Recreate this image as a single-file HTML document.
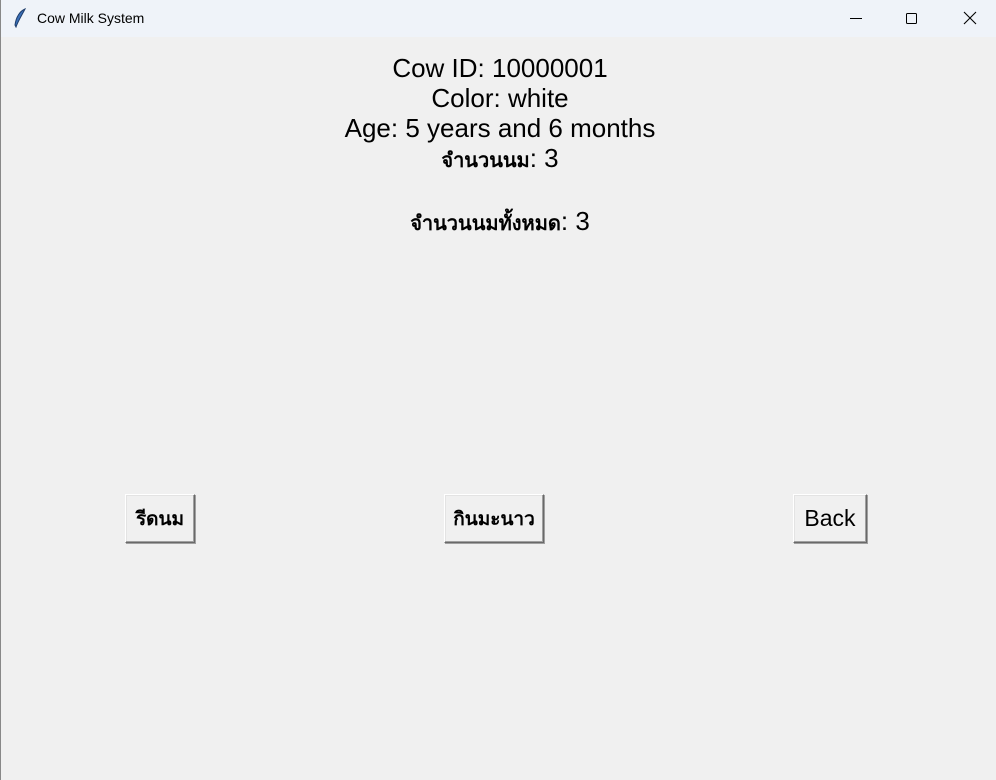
<!DOCTYPE html>
<html><head><meta charset="utf-8"><style>
body{margin:0;width:996px;height:780px;background:#f0f0f0;position:relative;overflow:hidden;font-family:"Liberation Sans",sans-serif;}
.tb{position:absolute;left:0;top:0;width:996px;height:37px;background:#eff3f9;}
.tb .t{position:absolute;left:37px;top:10px;font-size:14px;color:#000;font-family:"Segoe UI","Liberation Sans",sans-serif;}
.edge{position:absolute;left:0;top:0;width:1px;height:780px;background:#888;}
.l{position:absolute;left:0;width:1000px;text-align:center;font-size:26px;color:#000;line-height:30px;}
.th{font-weight:bold;font-size:20px;}
.b{position:absolute;top:494px;height:49px;box-sizing:border-box;background:#f0f0f0;border:1px solid;border-color:#fff #696969 #696969 #fff;box-shadow:1px 1px 0 #a0a0a0, inset -1px -1px 0 #a0a0a0, inset 1px 1px 0 #e3e3e3;display:flex;align-items:center;justify-content:center;font-size:19px;font-weight:bold;}
</style></head><body>
<div class="tb">
<svg style="position:absolute;left:13px;top:8px" width="14" height="20" viewBox="0 0 14 20"><path d="M12 1C7 3 3 9 2 17l1 2c2-6 6-12 9-18z" fill="#3a6fb8" stroke="#1e3d6b" stroke-width="1"/></svg>
<div class="t">Cow Milk System</div>
<svg style="position:absolute;left:849px;top:12px" width="14" height="14"><path d="M1 6.5h12" stroke="#000" stroke-width="1"/></svg>
<svg style="position:absolute;left:905px;top:12px" width="14" height="14"><rect x="1.5" y="1.5" width="10" height="10" fill="none" stroke="#000" stroke-width="1" rx="1"/></svg>
<svg style="position:absolute;left:963px;top:11px" width="14" height="14"><path d="M1 1l12 12M13 1L1 13" stroke="#000" stroke-width="1.1"/></svg>
</div>
<div class="edge"></div>
<div class="l" style="top:53px">Cow ID: 10000001</div>
<div class="l" style="top:83px">Color: white</div>
<div class="l" style="top:113px">Age: 5 years and 6 months</div>
<div class="l" style="top:143px"><span class="th">จำนวนนม</span>: 3</div>
<div class="l" style="top:206px"><span class="th">จำนวนนมทั้งหมด</span>: 3</div>
<div class="b" style="left:125px;width:70px">รีดนม</div>
<div class="b" style="left:444px;width:100px">กินมะนาว</div>
<div class="b" style="left:793px;width:74px;font-weight:normal;font-size:23px">Back</div>
</body></html>
